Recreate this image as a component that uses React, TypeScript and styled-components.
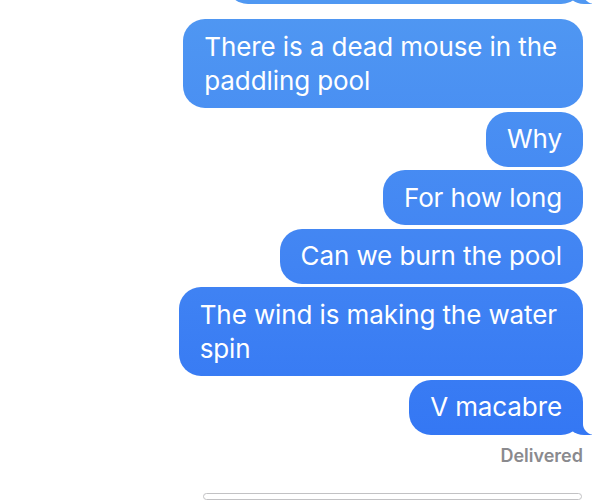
import React, { FC } from 'react';
import styled, { createGlobalStyle } from 'styled-components';

interface Message {
    lines: string[],
    tail?: boolean
}

const messages: Message[] = [
    { lines: ["There is a dead mouse in the", "paddling pool"] },
    { lines: ["Why"] },
    { lines: ["For how long"] },
    { lines: ["Can we burn the pool"] },
    { lines: ["The wind is making the water", "spin"] },
    { lines: ["V macabre"], tail: true },
];

const App: FC = () => {
    return (
        <>
            <GlobalStyle />
            <Screen>
                <Thread>
                    <CutBubble $tail={true} $wrapped={false} />
                    <Group>
                        {messages.map((m, i) => (
                            <Bubble key={i} $tail={!!m.tail} $wrapped={m.lines.length > 1}>
                                {m.lines.map((line, j) => <Line key={j}>{line}</Line>)}
                            </Bubble>
                        ))}
                    </Group>
                    <Status>Delivered</Status>
                </Thread>
                <Composer />
            </Screen>
        </>
    );
}

const bubbleFill = `linear-gradient(180deg, #5098f2 0px, #4285f3 250px, #3174f4 480px)`;

const GlobalStyle = createGlobalStyle`
    html, body {
        margin: 0;
        padding: 0;
        background: #fff;
    }
    body {
        font-family: "Inter", "Liberation Sans", sans-serif;
    }
`;

const Screen = styled.div`
    width: 610px;
    height: 500px;
    overflow: hidden;
    display: flex;
    flex-direction: column;
`;

const Thread = styled.div`
    display: flex;
    flex-direction: column;
    align-items: flex-end;
    padding-right: 27px;
`;

const Group = styled.div`
    display: flex;
    flex-direction: column;
    align-items: flex-end;
    gap: 3.5px;
    margin-top: 15px;
`;

const Bubble = styled.div<{ $tail: boolean, $wrapped: boolean }>`
    position: relative;
    box-sizing: border-box;
    padding: 10.5px ${p => p.$wrapped ? 26 : 21}px 10.5px 21px;
    border-radius: 22px;
    background: ${bubbleFill};
    background-attachment: fixed;
    color: #fff;
    font-size: 26px;
    line-height: 34px;
    letter-spacing: -0.1px;

    ${p => p.$tail && `
        &::before {
            content: "";
            position: absolute;
            bottom: 0;
            right: -9px;
            width: 26px;
            height: 26px;
            background: ${bubbleFill};
            background-attachment: fixed;
            border-bottom-left-radius: 18px 16px;
        }
        &::after {
            content: "";
            position: absolute;
            bottom: 0;
            right: -14px;
            width: 14px;
            height: 26px;
            background: #fff;
            border-bottom-left-radius: 12px 11px;
        }
    `}
`;

const CutBubble = styled(Bubble)`
    width: 357px;
    height: 55px;
    margin-top: -51px;
`;

const Line = styled.div`
    position: relative;
    z-index: 1;
    white-space: nowrap;
`;

const Status = styled.div`
    margin-top: 10px;
    color: #8a8a8e;
    font-size: 18px;
    font-weight: 600;
    line-height: 21px;
`;

const Composer = styled.div`
    margin: 27px 28px 0 203px;
    height: 44px;
    border: 1.5px solid #c2c2c4;
    border-radius: 24px;
`;

export default App;
